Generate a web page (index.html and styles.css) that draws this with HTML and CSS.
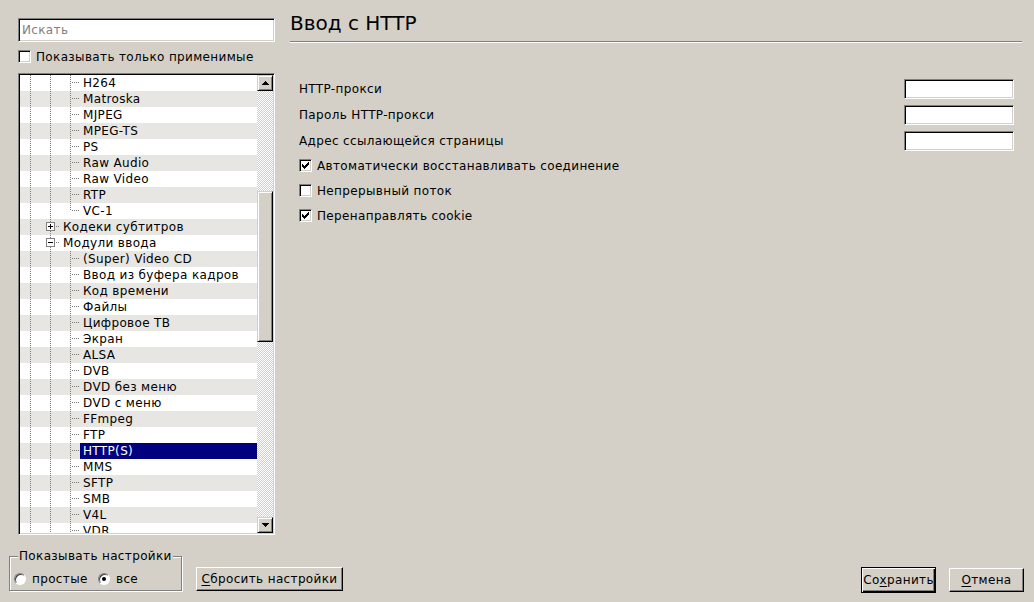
FILE: index.html
```html
<!DOCTYPE html>
<html lang="ru">
<head>
<meta charset="utf-8">
<title>Настройки</title>
<link rel="stylesheet" href="styles.css">
</head>
<body>
<div class="window">
  <div class="main">
    <aside class="sidebar">
      <div class="search"><span class="placeholder">Искать</span></div>
      <div class="check-row top-check"><span class="cb"></span><span>Показывать только применимые</span></div>
      <div class="tree">
        <div class="tree-rows">
          <div class="row"><i class="g v"></i><i class="g v"></i><i class="g t"></i><span class="lbl">H264</span></div>
          <div class="row"><i class="g v"></i><i class="g v"></i><i class="g t"></i><span class="lbl">Matroska</span></div>
          <div class="row"><i class="g v"></i><i class="g v"></i><i class="g t"></i><span class="lbl">MJPEG</span></div>
          <div class="row"><i class="g v"></i><i class="g v"></i><i class="g t"></i><span class="lbl">MPEG-TS</span></div>
          <div class="row"><i class="g v"></i><i class="g v"></i><i class="g t"></i><span class="lbl">PS</span></div>
          <div class="row"><i class="g v"></i><i class="g v"></i><i class="g t"></i><span class="lbl">Raw Audio</span></div>
          <div class="row"><i class="g v"></i><i class="g v"></i><i class="g t"></i><span class="lbl">Raw Video</span></div>
          <div class="row"><i class="g v"></i><i class="g v"></i><i class="g t"></i><span class="lbl">RTP</span></div>
          <div class="row"><i class="g v"></i><i class="g v"></i><i class="g l"></i><span class="lbl">VC-1</span></div>
          <div class="row"><i class="g v"></i><i class="g e"><b class="box plus"></b></i><span class="lbl">Кодеки субтитров</span></div>
          <div class="row"><i class="g v"></i><i class="g e"><b class="box"></b></i><span class="lbl">Модули ввода</span></div>
          <div class="row"><i class="g v"></i><i class="g v"></i><i class="g t"></i><span class="lbl">(Super) Video CD</span></div>
          <div class="row"><i class="g v"></i><i class="g v"></i><i class="g t"></i><span class="lbl">Ввод из буфера кадров</span></div>
          <div class="row"><i class="g v"></i><i class="g v"></i><i class="g t"></i><span class="lbl">Код времени</span></div>
          <div class="row"><i class="g v"></i><i class="g v"></i><i class="g t"></i><span class="lbl">Файлы</span></div>
          <div class="row"><i class="g v"></i><i class="g v"></i><i class="g t"></i><span class="lbl">Цифровое ТВ</span></div>
          <div class="row"><i class="g v"></i><i class="g v"></i><i class="g t"></i><span class="lbl">Экран</span></div>
          <div class="row"><i class="g v"></i><i class="g v"></i><i class="g t"></i><span class="lbl">ALSA</span></div>
          <div class="row"><i class="g v"></i><i class="g v"></i><i class="g t"></i><span class="lbl">DVB</span></div>
          <div class="row"><i class="g v"></i><i class="g v"></i><i class="g t"></i><span class="lbl">DVD без меню</span></div>
          <div class="row"><i class="g v"></i><i class="g v"></i><i class="g t"></i><span class="lbl">DVD с меню</span></div>
          <div class="row"><i class="g v"></i><i class="g v"></i><i class="g t"></i><span class="lbl">FFmpeg</span></div>
          <div class="row"><i class="g v"></i><i class="g v"></i><i class="g t"></i><span class="lbl">FTP</span></div>
          <div class="row"><i class="g v"></i><i class="g v"></i><i class="g t"></i><span class="lbl selected">HTTP(S)</span></div>
          <div class="row"><i class="g v"></i><i class="g v"></i><i class="g t"></i><span class="lbl">MMS</span></div>
          <div class="row"><i class="g v"></i><i class="g v"></i><i class="g t"></i><span class="lbl">SFTP</span></div>
          <div class="row"><i class="g v"></i><i class="g v"></i><i class="g t"></i><span class="lbl">SMB</span></div>
          <div class="row"><i class="g v"></i><i class="g v"></i><i class="g t"></i><span class="lbl">V4L</span></div>
          <div class="row"><i class="g v"></i><i class="g v"></i><i class="g t"></i><span class="lbl">VDR</span></div>
        </div>
        <div class="vscroll">
          <div class="sbtn"><svg width="7" height="4" viewBox="0 0 7 4" shape-rendering="crispEdges"><path d="M3 0h1v1h-1zM2 1h3v1h-3zM1 2h5v1h-5zM0 3h7v1h-7z" fill="#000"/></svg></div>
          <div class="trough"><div class="thumb"></div></div>
          <div class="sbtn"><svg width="7" height="4" viewBox="0 0 7 4" shape-rendering="crispEdges"><path d="M0 0h7v1h-7zM1 1h5v1h-5zM2 2h3v1h-3zM3 3h1v1h-1z" fill="#000"/></svg></div>
        </div>
      </div>
    </aside>
    <section class="content">
      <h1 class="title">Ввод с HTTP</h1>
      <div class="form">
        <div class="frow"><span class="flabel">HTTP-прокси</span><span class="field"></span></div>
        <div class="frow"><span class="flabel">Пароль HTTP-прокси</span><span class="field"></span></div>
        <div class="frow"><span class="flabel">Адрес ссылающейся страницы</span><span class="field"></span></div>
        <div class="checks">
          <div class="check-row crow"><span class="cb"><svg width="11" height="11" viewBox="0 0 11 11" shape-rendering="crispEdges"><path d="M2 4h1v3h-1zM3 5h1v3h-1zM4 6h1v3h-1zM5 5h1v3h-1zM6 4h1v3h-1zM7 3h1v3h-1zM8 2h1v3h-1z" fill="#000"/></svg></span><span>Автоматически восстанавливать соединение</span></div>
          <div class="check-row crow"><span class="cb"></span><span>Непрерывный поток</span></div>
          <div class="check-row crow"><span class="cb"><svg width="11" height="11" viewBox="0 0 11 11" shape-rendering="crispEdges"><path d="M2 4h1v3h-1zM3 5h1v3h-1zM4 6h1v3h-1zM5 5h1v3h-1zM6 4h1v3h-1zM7 3h1v3h-1zM8 2h1v3h-1z" fill="#000"/></svg></span><span>Перенаправлять cookie</span></div>
        </div>
      </div>
    </section>
  </div>
  <footer class="footer">
    <fieldset class="group">
      <legend>Показывать настройки</legend>
      <div class="radios">
        <span class="opt first"><span class="radio"></span><span>простые</span></span>
        <span class="opt"><span class="radio on"></span><span>все</span></span>
      </div>
    </fieldset>
    <button class="btn reset"><u>С</u>бросить настройки</button>
    <div class="spacer"></div>
    <button class="btn default">Со<u>х</u>ранить</button>
    <button class="btn cancel"><u>О</u>тмена</button>
  </footer>
</div>
</body>
</html>
```

FILE: styles.css
```css
* { box-sizing: border-box; }

html, body {
  margin: 0;
  padding: 0;
}

body {
  width: 1034px;
  height: 602px;
  overflow: hidden;
  background: #d4d0c8;
  color: #000;
  font-family: "DejaVu Sans", "Liberation Sans", sans-serif;
  font-size: 12px;
  letter-spacing: 0.35px;
}

.window {
  display: flex;
  flex-direction: column;
  height: 602px;
}

.main {
  display: flex;
  height: 549px;
}

/* ---------- sidebar ---------- */
.sidebar {
  width: 257px;
  margin-left: 18px;
  padding-top: 18px;
  flex: none;
}

.search {
  height: 24px;
  background: #fff;
  border: 1px solid;
  border-color: #808080 #fff #fff #808080;
  box-shadow: inset 1px 1px #000, inset -1px -1px #d4d0c8;
  padding-left: 3px;
  line-height: 22px;
}

.placeholder { color: #808080; }

.check-row {
  display: flex;
  align-items: center;
  gap: 5px;
  white-space: nowrap;
}

.top-check {
  margin-top: 8px;
  height: 13px;
}

.cb {
  width: 13px;
  height: 13px;
  flex: none;
  background: #fff;
  border: 1px solid;
  border-color: #808080 #fff #fff #808080;
  box-shadow: inset 1px 1px #000, inset -1px -1px #d4d0c8;
  display: flex;
}

.cb svg { display: block; }

.tree {
  margin-top: 10px;
  height: 462px;
  display: flex;
  border: 1px solid;
  border-color: #808080 #fff #fff #808080;
  padding: 1px;
  box-shadow: inset 1px 1px #000, inset -1px -1px #d4d0c8;
  background: #fff;
}

.tree-rows {
  width: 237px;
  flex: none;
  overflow: hidden;
}

.row {
  display: flex;
  height: 16px;
  background: #fff;
}

.row:nth-child(even) { background: #e8e6e2; }

.g {
  width: 20px;
  height: 16px;
  flex: none;
  display: block;
}

.g.v {
  background: repeating-linear-gradient(to bottom, #7a7a7a 0 1px, transparent 1px 2px) 10px 0 / 1px 16px no-repeat;
}

.g.t {
  background:
    repeating-linear-gradient(to bottom, #7a7a7a 0 1px, transparent 1px 2px) 10px 0 / 1px 16px no-repeat,
    repeating-linear-gradient(to right, #7a7a7a 0 1px, transparent 1px 2px) 12px 7px / 8px 1px no-repeat;
}

.g.l {
  background:
    repeating-linear-gradient(to bottom, #7a7a7a 0 1px, transparent 1px 2px) 10px 0 / 1px 8px no-repeat,
    repeating-linear-gradient(to right, #7a7a7a 0 1px, transparent 1px 2px) 12px 7px / 8px 1px no-repeat;
}

.g.e {
  padding: 3px 0 0 6px;
  background:
    repeating-linear-gradient(to bottom, #7a7a7a 0 1px, transparent 1px 2px) 10px 0 / 1px 16px no-repeat,
    repeating-linear-gradient(to right, #7a7a7a 0 1px, transparent 1px 2px) 16px 7px / 4px 1px no-repeat;
}

.box {
  display: block;
  width: 9px;
  height: 9px;
  border: 1px solid #808080;
  background: linear-gradient(#000, #000) center / 5px 1px no-repeat, #fff;
}

.box.plus {
  background:
    linear-gradient(#000, #000) center / 5px 1px no-repeat,
    linear-gradient(#000, #000) center / 1px 5px no-repeat,
    #fff;
}

.lbl {
  flex: 1;
  padding-left: 3px;
  line-height: 16px;
  white-space: nowrap;
  overflow: hidden;
}

.lbl.selected {
  background: #000080;
  color: #fff;
}

.vscroll {
  width: 16px;
  flex: none;
  display: flex;
  flex-direction: column;
}

.sbtn, .thumb {
  background: #d4d0c8;
  border: 1px solid;
  border-color: #d4d0c8 #000 #000 #d4d0c8;
  box-shadow: inset 1px 1px #fff, inset -1px -1px #808080;
}

.sbtn {
  height: 16px;
  flex: none;
  display: flex;
  align-items: center;
  justify-content: center;
}

.sbtn svg { display: block; }

.trough {
  flex: 1;
  background: repeating-conic-gradient(#d4d0c8 0% 25%, #fff 0% 50%) 0 0 / 2px 2px;
}

.thumb {
  margin-top: 100px;
  height: 151px;
}

/* ---------- content ---------- */
.content {
  flex: 1;
  margin-left: 15px;
  padding-right: 12px;
}

.title {
  margin: 0;
  font-size: 20px;
  font-weight: normal;
  letter-spacing: 0;
  line-height: 24px;
  padding: 11px 0 6px 0;
  border-bottom: 1px solid #808080;
  box-shadow: 0 1px 0 #fff;
}

.form {
  margin-top: 34px;
  padding-left: 9px;
}

.frow {
  display: flex;
  align-items: center;
  justify-content: space-between;
  height: 26px;
}

.field {
  width: 110px;
  height: 20px;
  margin-right: 8px;
  background: #fff;
  border: 1px solid;
  border-color: #808080 #fff #fff #808080;
  box-shadow: inset 1px 1px #000, inset -1px -1px #d4d0c8;
}

.checks { margin-top: -1px; }

.crow { height: 25px; }

/* ---------- footer ---------- */
.footer {
  flex: 1;
  display: flex;
  align-items: flex-end;
  padding: 0 10px 11px 9px;
}

.group {
  margin: 0;
  width: 173px;
  padding: 9px 4px 4px 4px;
  border: 1px solid #808080;
  box-shadow: 1px 1px 0 #fff, inset 1px 1px 0 #fff;
  min-inline-size: 0;
}

.group legend {
  padding: 0 1px;
  margin-left: 4px;
  line-height: 14px;
  background: #d4d0c8;
}

.radios {
  display: flex;
  align-items: center;
  height: 14px;
}

.opt {
  display: flex;
  align-items: center;
  gap: 6px;
}

.opt.first { width: 84px; }

.radio {
  width: 12px;
  height: 12px;
  border-radius: 50%;
  background: #fff;
  border: 1px solid;
  border-color: #808080 #fff #fff #808080;
  box-shadow: inset 1px 1px #404040;
  display: flex;
  align-items: center;
  justify-content: center;
}

.radio.on::after {
  content: "";
  width: 4px;
  height: 4px;
  border-radius: 50%;
  background: #000;
}

.btn {
  font: inherit;
  letter-spacing: 0.35px;
  color: #000;
  background: #d4d0c8;
  margin: 0;
  padding: 0;
  height: 24px;
  border: 1px solid;
  border-color: #fff #000 #000 #fff;
  box-shadow: inset -1px -1px #808080;
  text-align: center;
  white-space: nowrap;
}

.btn u { text-underline-offset: 2px; }

.reset {
  width: 147px;
  margin-left: 14px;
}

.spacer { flex: 1; }

.default {
  width: 75px;
  height: 26px;
  margin-bottom: -2px;
  border: 1px solid #000;
  box-shadow: inset 1px 1px #fff, inset -1px -1px #000, inset -2px -2px #808080;
}

.cancel {
  width: 75px;
  margin-left: 13px;
  margin-bottom: -1px;
}
```
